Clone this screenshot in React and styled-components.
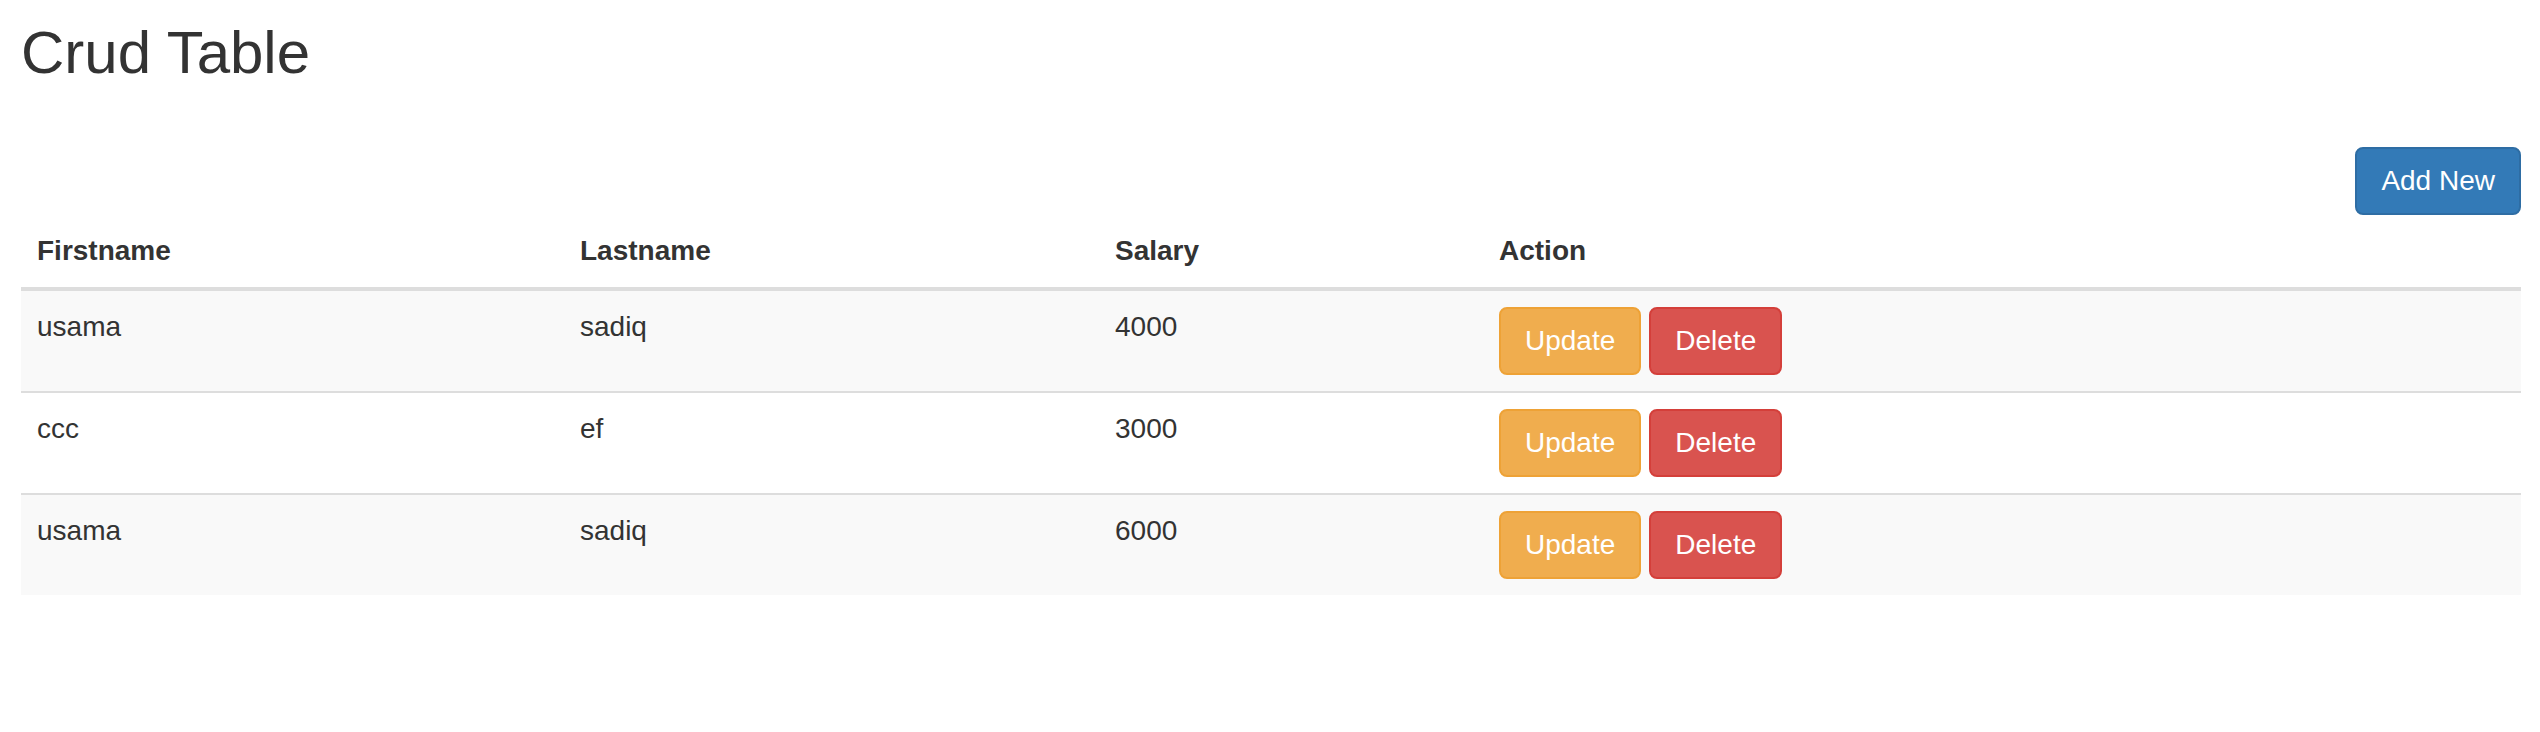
import React from "react";
import styled, { createGlobalStyle } from "styled-components";

// bootstrap 3 look, everything at 2x
const GlobalStyle = createGlobalStyle`
  *, *::before, *::after {
    box-sizing: border-box;
  }
  body {
    margin: 0;
    background: #fff;
    color: #333;
    font-family: "Liberation Sans", Arial, Helvetica, sans-serif;
    font-size: 28px;
    line-height: 40px;
  }
`;

const variants = {
  primary: { bg: "#337ab7", border: "#2e6da4" },
  warning: { bg: "#f0ad4e", border: "#eea236" },
  danger: { bg: "#d9534f", border: "#d43f3a" },
};

const Page = styled.div`
  padding: 0 19px 0 21px;
`;

const Title = styled.h2`
  margin: 20px 0 0;
  font-size: 60px;
  line-height: 66px;
  font-weight: 500;
  color: #333;
`;

const Toolbar = styled.div`
  display: flex;
  justify-content: flex-end;
  margin-top: 61px;
`;

const Button = styled.button`
  display: inline-block;
  margin: 0;
  padding: 12px 24px;
  font-family: inherit;
  font-size: 28px;
  line-height: 40px;
  font-weight: 400;
  color: #fff;
  background-color: ${(p) => variants[p.$variant].bg};
  border: 2px solid ${(p) => variants[p.$variant].border};
  border-radius: 8px;
  white-space: nowrap;
  cursor: pointer;
`;

const Table = styled.table`
  width: 100%;
  table-layout: fixed;
  border-collapse: collapse;
  border-spacing: 0;
  margin-bottom: 40px;
`;

const Col = styled.col`
  width: ${(p) => (p.$w ? `${p.$w}px` : "auto")};
`;

const Th = styled.th`
  padding: 16px;
  text-align: left;
  vertical-align: bottom;
  font-weight: 700;
  line-height: 40px;
  border-bottom: 4px solid #ddd;
`;

const Row = styled.tr`
  background-color: ${(p) => (p.$striped ? "#f9f9f9" : "transparent")};
`;

const Td = styled.td`
  padding: 16px;
  vertical-align: top;
  line-height: 40px;
  border-top: 2px solid #ddd;
`;

const Actions = styled.div`
  display: flex;
  gap: 8px;
`;

const rows = [
  { id: 1, firstname: "usama", lastname: "sadiq", salary: 4000 },
  { id: 2, firstname: "ccc", lastname: "ef", salary: 3000 },
  { id: 3, firstname: "usama", lastname: "sadiq", salary: 6000 },
];

const App = () => {
  return (
    <Page>
      <GlobalStyle />
      <Title>Crud Table</Title>
      <Toolbar>
        <Button $variant="primary">Add New</Button>
      </Toolbar>
      <Table>
        <colgroup>
          <Col $w={543} />
          <Col $w={535} />
          <Col $w={384} />
          <Col />
        </colgroup>
        <thead>
          <tr>
            <Th>Firstname</Th>
            <Th>Lastname</Th>
            <Th>Salary</Th>
            <Th>Action</Th>
          </tr>
        </thead>
        <tbody>
          {rows.map((row, i) => (
            <Row key={row.id} $striped={i % 2 === 0}>
              <Td>{row.firstname}</Td>
              <Td>{row.lastname}</Td>
              <Td>{row.salary}</Td>
              <Td>
                <Actions>
                  <Button $variant="warning">Update</Button>
                  <Button $variant="danger">Delete</Button>
                </Actions>
              </Td>
            </Row>
          ))}
        </tbody>
      </Table>
    </Page>
  );
};

export default App;
